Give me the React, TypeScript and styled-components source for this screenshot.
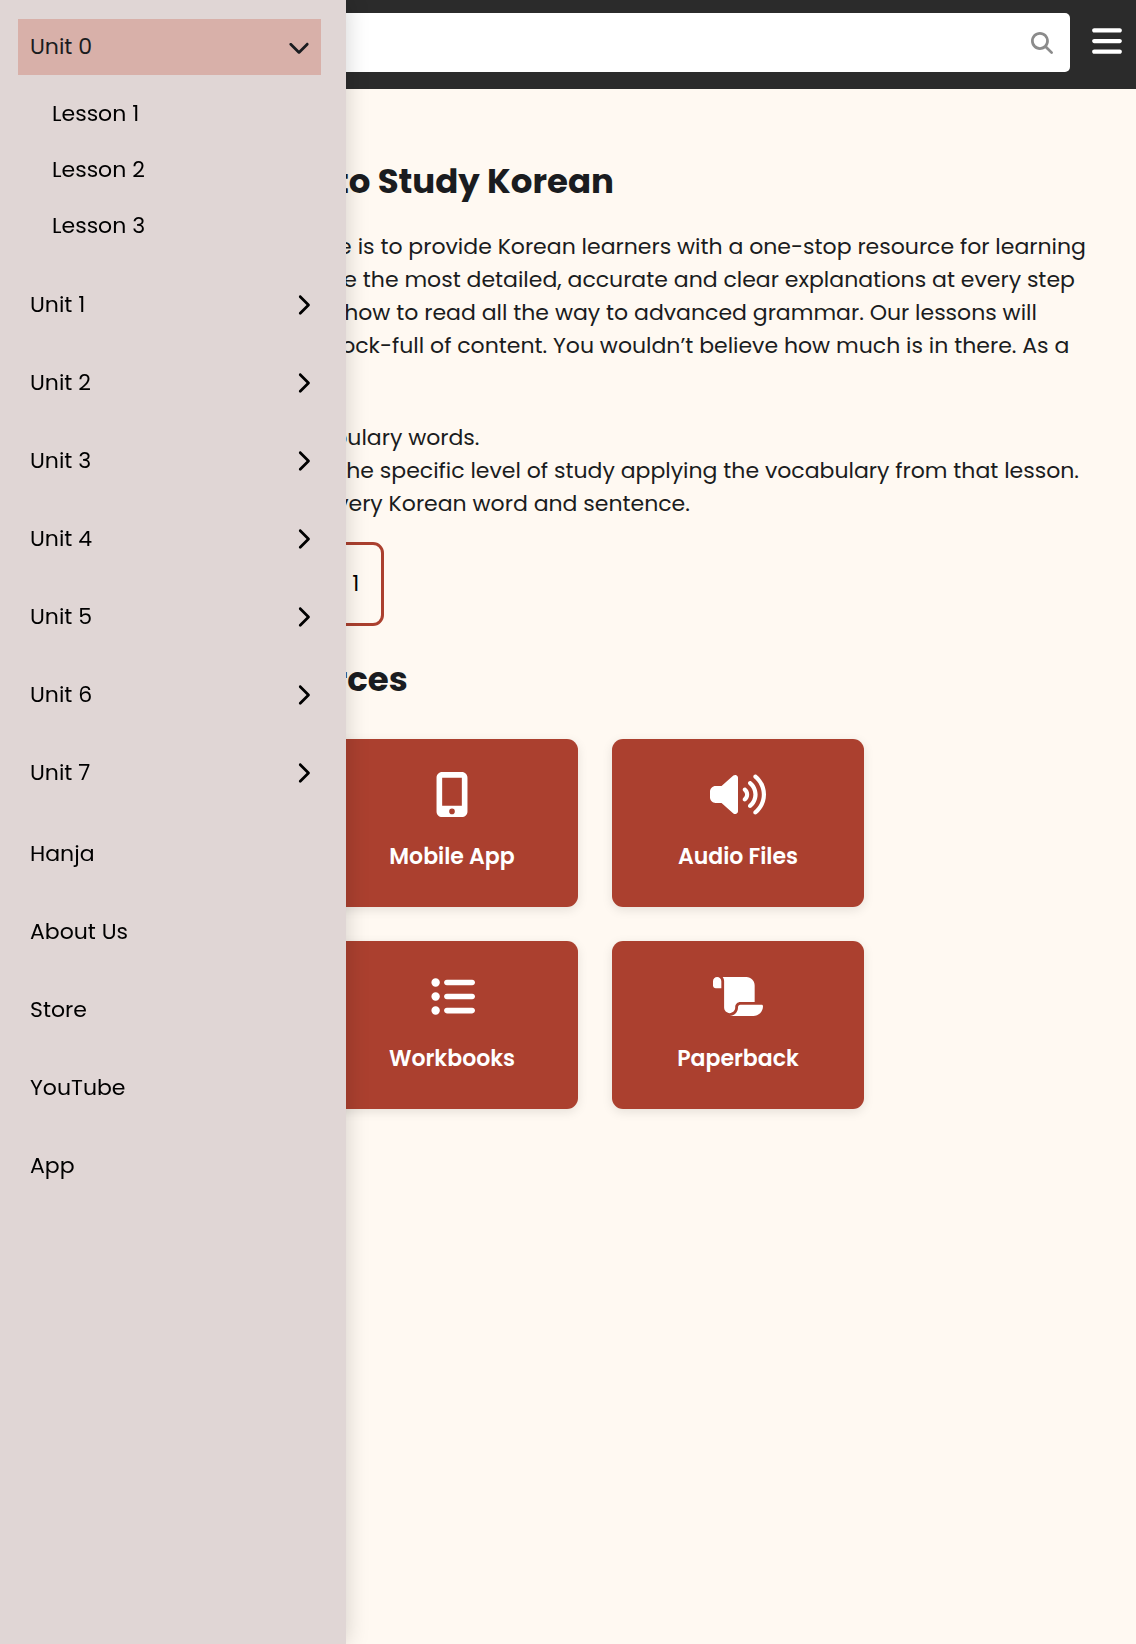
import React, { useState } from "react";
import styled, { createGlobalStyle } from "styled-components";
import {
  FaBars,
  FaChevronDown,
  FaChevronRight,
  FaListUl,
  FaMagnifyingGlass,
  FaMobileScreenButton,
  FaScroll,
  FaVolumeHigh,
} from "react-icons/fa6";

const GlobalStyle = createGlobalStyle`
  *, *::before, *::after { box-sizing: border-box; }
  body {
    margin: 0;
    background: #fff9f2;
    color: #1a1c20;
    font-family: Poppins, Inter, "Noto Sans", sans-serif;
    font-size: 22px;
    line-height: 34px;
  }
  button, input { font: inherit; }
  a { color: inherit; text-decoration: none; }
  ul { list-style: none; margin: 0; padding: 0; }
`;

/* Font Awesome glyphs differ in width at one height, so both are given. */
const Glyph = styled.span<{ $width: number; $height: number }>`
  display: flex;
  flex: none;

  svg {
    width: ${(p) => p.$width}px;
    height: ${(p) => p.$height}px;
  }
`;

const Header = styled.header`
  display: flex;
  align-items: flex-start;
  gap: 22px;
  height: 89px;
  padding: 13px 14px 0 40px;
  background: #2b2b2b;
`;

const SearchBox = styled.form`
  display: flex;
  align-items: center;
  flex: 1;
  height: 59px;
  padding: 0 17px 0 22px;
  border-radius: 5px;
  background: #fff;
`;

const SearchInput = styled.input`
  flex: 1;
  min-width: 0;
  border: 0;
  outline: 0;
  background: transparent;
`;

const IconButton = styled.button<{ $color: string }>`
  display: flex;
  align-items: center;
  height: 56px;
  padding: 0;
  border: 0;
  background: transparent;
  color: ${(p) => p.$color};
  cursor: pointer;
`;

const Drawer = styled.nav`
  position: fixed;
  inset: 0 auto 0 0;
  z-index: 10;
  display: flex;
  flex-direction: column;
  gap: 25px;
  width: 346px;
  padding: 19px 25px 18px 18px;
  overflow: hidden;
  background: #e0d6d5;
  box-shadow: 0 0 22px rgba(0, 0, 0, 0.18);
  color: #000;
`;

const MenuList = styled.ul`
  display: flex;
  flex-direction: column;
  gap: 22px;
`;

const UnitButton = styled.button<{ $open: boolean }>`
  display: flex;
  align-items: center;
  justify-content: space-between;
  width: 100%;
  height: 56px;
  padding: 0 11px 0 12px;
  border: 0;
  background: ${(p) => (p.$open ? "#d8b0a9" : "transparent")};
  color: ${(p) => (p.$open ? "#1a1c20" : "#000")};
  cursor: pointer;
`;

const MenuLink = styled.a`
  display: flex;
  align-items: center;
  height: 56px;
  padding: 0 11px 0 12px;
`;

const LessonList = styled.ul`
  padding: 11px 0 1px 22px;
`;

const Main = styled.main`
  padding: 67px 36px;
`;

const Heading = styled.h1`
  margin: 0 0 24px;
  font-size: 34px;
  font-weight: 700;
  line-height: 50px;
  white-space: nowrap;
`;

const Copy = styled.p`
  margin: 0 0 26px;
  padding-left: 16px;
  line-height: 33px;
  white-space: nowrap;
`;

const Facts = styled.ul`
  margin-bottom: 22px;
  padding-left: 16px;
  line-height: 33px;
  white-space: nowrap;
`;

const StartLink = styled.a`
  display: inline-block;
  margin-bottom: 28px;
  padding: 22px;
  border: 3px solid #ab402f;
  border-radius: 11px;
  color: #000;
`;

const CardGrid = styled.div`
  display: grid;
  grid-template-columns: repeat(auto-fill, 252px);
  gap: 34px;
  max-width: 860px;
  padding: 11px 4px 0;
`;

const Card = styled.a`
  display: flex;
  flex-direction: column;
  align-items: center;
  gap: 23px;
  padding: 33px 11px;
  border-radius: 11px;
  background: #ab402f;
  box-shadow: 0 3px 11px rgba(0, 0, 0, 0.1);
  color: #fff;
  font-weight: 600;
`;

const units = ["Unit 0", "Unit 1", "Unit 2", "Unit 3", "Unit 4", "Unit 5", "Unit 6", "Unit 7"];
const lessons = ["Lesson 1", "Lesson 2", "Lesson 3"];
const pages = ["Hanja", "About Us", "Store", "YouTube", "App"];

const resources = [
  { label: "Lessons", Icon: FaListUl, width: 45 },
  { label: "Mobile App", Icon: FaMobileScreenButton, width: 34 },
  { label: "Audio Files", Icon: FaVolumeHigh, width: 56 },
  { label: "Videos", Icon: FaVolumeHigh, width: 56 },
  { label: "Workbooks", Icon: FaListUl, width: 45 },
  { label: "Paperback", Icon: FaScroll, width: 50 },
];

export default function App() {
  const [openUnit, setOpenUnit] = useState("Unit 0");

  return (
    <>
      <GlobalStyle />
      <Drawer aria-label="Lessons">
        <MenuList>
          {units.map((unit) => {
            const open = unit === openUnit;
            return (
              <li key={unit}>
                <UnitButton
                  type="button"
                  $open={open}
                  aria-expanded={open}
                  onClick={() => setOpenUnit(open ? "" : unit)}
                >
                  {unit}
                  <Glyph $width={open ? 22 : 14} $height={22}>
                    {open ? <FaChevronDown /> : <FaChevronRight />}
                  </Glyph>
                </UnitButton>
                {open && (
                  <LessonList>
                    {lessons.map((lesson) => (
                      <li key={lesson}>
                        <MenuLink href="#">{lesson}</MenuLink>
                      </li>
                    ))}
                  </LessonList>
                )}
              </li>
            );
          })}
        </MenuList>
        <MenuList>
          {pages.map((page) => (
            <li key={page}>
              <MenuLink href="#">{page}</MenuLink>
            </li>
          ))}
        </MenuList>
      </Drawer>

      <Header>
        <SearchBox role="search" onSubmit={(e) => e.preventDefault()}>
          <SearchInput type="search" aria-label="Search" />
          <IconButton type="submit" aria-label="Submit search" $color="#8b8b8b">
            <Glyph $width={22} $height={22}>
              <FaMagnifyingGlass />
            </Glyph>
          </IconButton>
        </SearchBox>
        <IconButton type="button" aria-label="Menu" $color="#fff">
          <Glyph $width={30} $height={34}>
            <FaBars />
          </Glyph>
        </IconButton>
      </Header>

      <Main>
        <Heading>Welcome to How to Study Korean</Heading>
        <Copy>
          The purpose of this website is to provide Korean learners with a one-stop resource for learning
          <br />
          Korean. Our lessons provide the most detailed, accurate and clear explanations at every step
          <br />
          from the very basics: from how to read all the way to advanced grammar. Our lessons will
          <br />
          be huge, since they are chock-full of content. You wouldn’t believe how much is in there. As a
          <br />
          quick overview, they have:
        </Copy>
        <Facts>
          <li>Thousands of useful vocabulary words.</li>
          <li>Example sentences set at the specific level of study applying the vocabulary from that lesson.</li>
          <li>Full audio recordings for every Korean word and sentence.</li>
        </Facts>
        <StartLink href="#">Start now at Unit 0, Lesson 1</StartLink>
        <Heading as="h2">Additional Resources</Heading>
        <CardGrid>
          {resources.map(({ label, Icon, width }) => (
            <Card key={label} href="#">
              <Glyph $width={width} $height={45}>
                <Icon aria-hidden="true" />
              </Glyph>
              {label}
            </Card>
          ))}
        </CardGrid>
      </Main>
    </>
  );
}
